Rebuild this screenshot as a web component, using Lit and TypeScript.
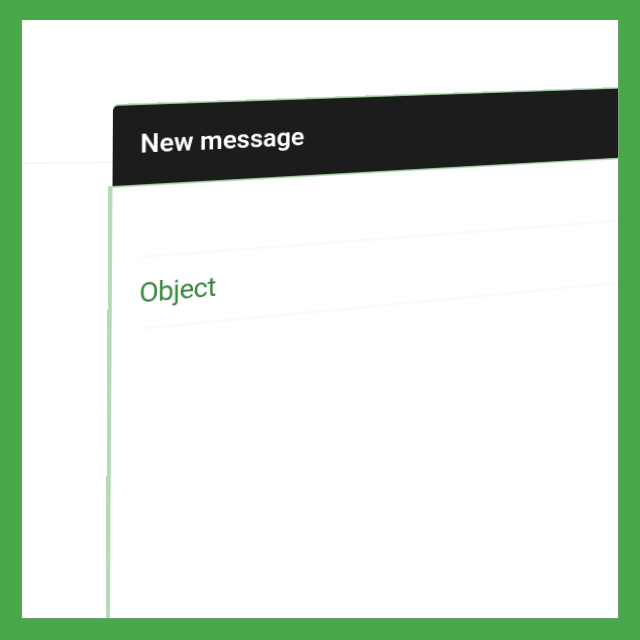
import { LitElement, html, css } from "lit";
import { customElement } from "lit/decorators.js";

@customElement("app-root")
export class AppRoot extends LitElement {
  static styles = css`
    :host { display: block; width: 640px; height: 640px; font-family: Roboto, "Liberation Sans", sans-serif; }
    .frame {
      box-sizing: border-box; width: 640px; height: 640px;
      border: solid #46a846; border-width: 20px 21px 21px 21px;
      background: #fff; overflow: hidden; position: relative;
    }
    .frame::after {
      content: ""; position: absolute; inset: 0;
      box-shadow: inset 1px 0 0 #6fa06f, inset -1px 0 0 #6fa06f, inset 0 -1px 0 #6fa06f;
      pointer-events: none;
    }
    .trace {
      position: absolute; left: 4px; top: 142px; width: 86px;
      border-top: 1px dotted #d8ead8; transform: rotate(-0.6deg); transform-origin: 100% 0;
    }
    .window {
      width: 640px; height: 640px; background: #fff;
      transform-origin: 0 0;
      transform: matrix3d(1.09, -0.0116, 0, 0.000289, -0.006, 1, 0, 0, 0, 0, 1, 0, 92, 86, 0, 1);
    }
    .header {
      box-sizing: border-box; height: 80px; padding: 0 26px;
      display: flex; align-items: center;
      background: #1c1c1c; color: #fff;
      font-size: 26px; font-weight: 600;
      border-top-left-radius: 5px;
      box-shadow: 0 -1.5px 0 #94c494, 0 1.5px 0 #94c494;
    }
    .header span { position: relative; top: -1px; }
    .body { height: 560px; box-shadow: -4px 0 0 #b6d9b6; }
    .field {
      box-sizing: border-box; height: 72px; margin-left: 26px;
      display: flex; align-items: center;
      box-shadow: 0 3px 4px -1px #f4f8f5;
      color: #38883e; font-size: 27px; font-weight: 400; letter-spacing: -0.5px;
    }
    .field span { position: relative; top: 2px; }
  `;
  render() {
    return html`<div class="frame">
      <div class="window">
        <div class="header"><span>New message</span></div>
        <div class="body">
          <div class="field"></div>
          <div class="field"><span>Object</span></div>
        </div>
      </div>
      <div class="trace"></div>
    </div>`;
  }
}
